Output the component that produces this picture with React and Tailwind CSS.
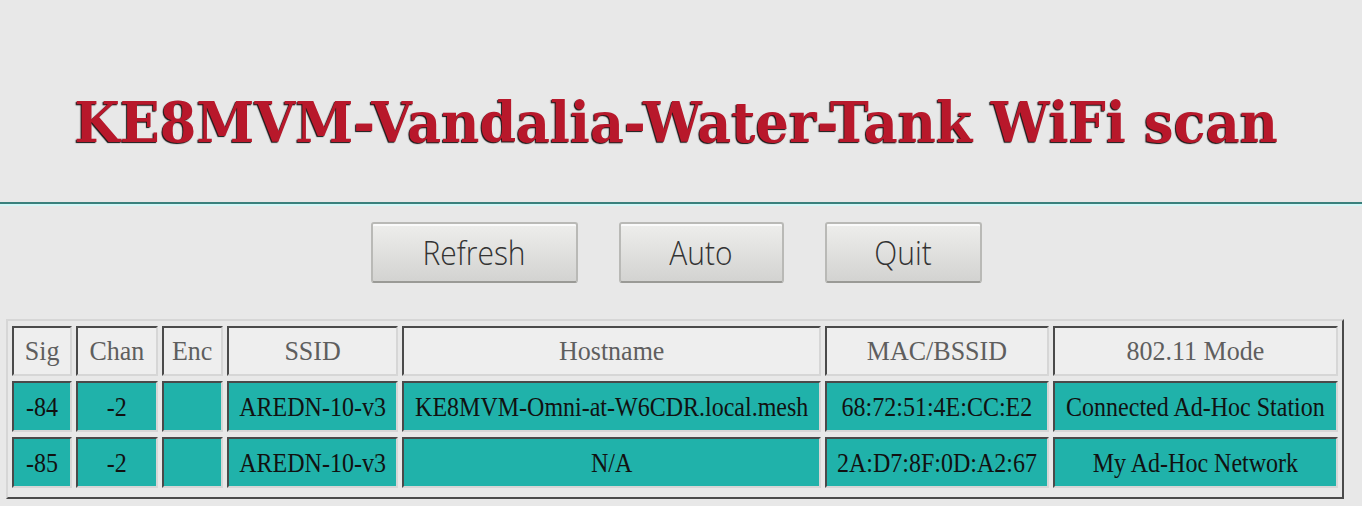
export default function App() {
  const cols = [
    { h: "Sig", w: 60 },
    { h: "Chan", w: 81 },
    { h: "Enc", w: 61 },
    { h: "SSID", w: 171 },
    { h: "Hostname", w: 417 },
    { h: "MAC/BSSID", w: 223 },
    { h: "802.11 Mode", w: 284 },
  ];
  const rows = [
    ["-84", "-2", "", "AREDN-10-v3", "KE8MVM-Omni-at-W6CDR.local.mesh", "68:72:51:4E:CC:E2", "Connected Ad-Hoc Station"],
    ["-85", "-2", "", "AREDN-10-v3", "N/A", "2A:D7:8F:0D:A2:67", "My Ad-Hoc Network"],
  ];
  const cell =
    "border-2 border-t-[#4a4a4a] border-l-[#4a4a4a] border-b-[#d6d6d6] border-r-[#d6d6d6] text-center p-0";
  return (
    <div className="w-[1362px] h-[506px] bg-[#e8e8e8] overflow-hidden">
      <div className="w-[1352px]">
        <div className="h-[202px] flex items-center justify-center pt-[44px]">
          <h1
            className="inline-block scale-y-[1.07] text-[#b8182b] font-bold text-[52.5px] leading-none [text-shadow:-1px_1px_1px_#111]"
            style={{ fontFamily: '"DejaVu Serif", serif' }}
          >
            KE8MVM-Vandalia-Water-Tank WiFi scan
          </h1>
        </div>
      </div>
      <div className="h-[2px] bg-[#3a807c]" />
      <div className="h-[2px] bg-[#d2f6f6]" />
      <div className="w-[1352px] flex justify-center gap-[41px] pt-[16px]">
        {[
          ["Refresh", 207],
          ["Auto", 165],
          ["Quit", 157],
        ].map(([t, w]) => (
          <button
            key={t}
            className="h-[61px] rounded-[3px] border-2 border-[#b9b9b6] border-b-[#9a9a96] bg-gradient-to-b from-[#eeeeec] to-[#d3d3d1] shadow-[inset_0_2px_0_#fafafa] text-[#333] text-[30px] font-light flex items-center justify-center"
            style={{ width: w, fontFamily: '"Open Sans", sans-serif' }}
          >
            <span className="inline-block scale-y-[1.08]">{t}</span>
          </button>
        ))}
      </div>
      <div className="pl-[6px] pt-[36px]">
        <table
          className="table-fixed border-separate border-spacing-x-[4.6px] border-spacing-y-[5px] w-[1338px] pb-[4px] border-2 border-t-[#d6d6d6] border-l-[#d6d6d6] border-b-[#4a4a4a] border-r-[#4a4a4a]"
          style={{ fontFamily: '"Liberation Serif", serif' }}
        >
          <colgroup>
            {cols.map((c) => (
              <col key={c.h} style={{ width: c.w }} />
            ))}
          </colgroup>
          <thead>
            <tr>
              {cols.map((c) => (
                <th
                  key={c.h}
                  className={`${cell} h-[50px] bg-[#eeeeee] text-[#5e5e5e] font-normal text-[26px]`}
                >
                  <span className="inline-block scale-y-[1.08] -translate-y-[1px]">{c.h}</span>
                </th>
              ))}
            </tr>
          </thead>
          <tbody>
            {rows.map((r, i) => (
              <tr key={i}>
                {r.map((v, j) => (
                  <td
                    key={j}
                    className={`${cell} h-[51px] bg-[#20b2aa] text-[#111] text-[24px] whitespace-nowrap`}
                  >
                    <span className="inline-block scale-y-[1.1]">{v}</span>
                  </td>
                ))}
              </tr>
            ))}
          </tbody>
        </table>
      </div>
    </div>
  );
}
